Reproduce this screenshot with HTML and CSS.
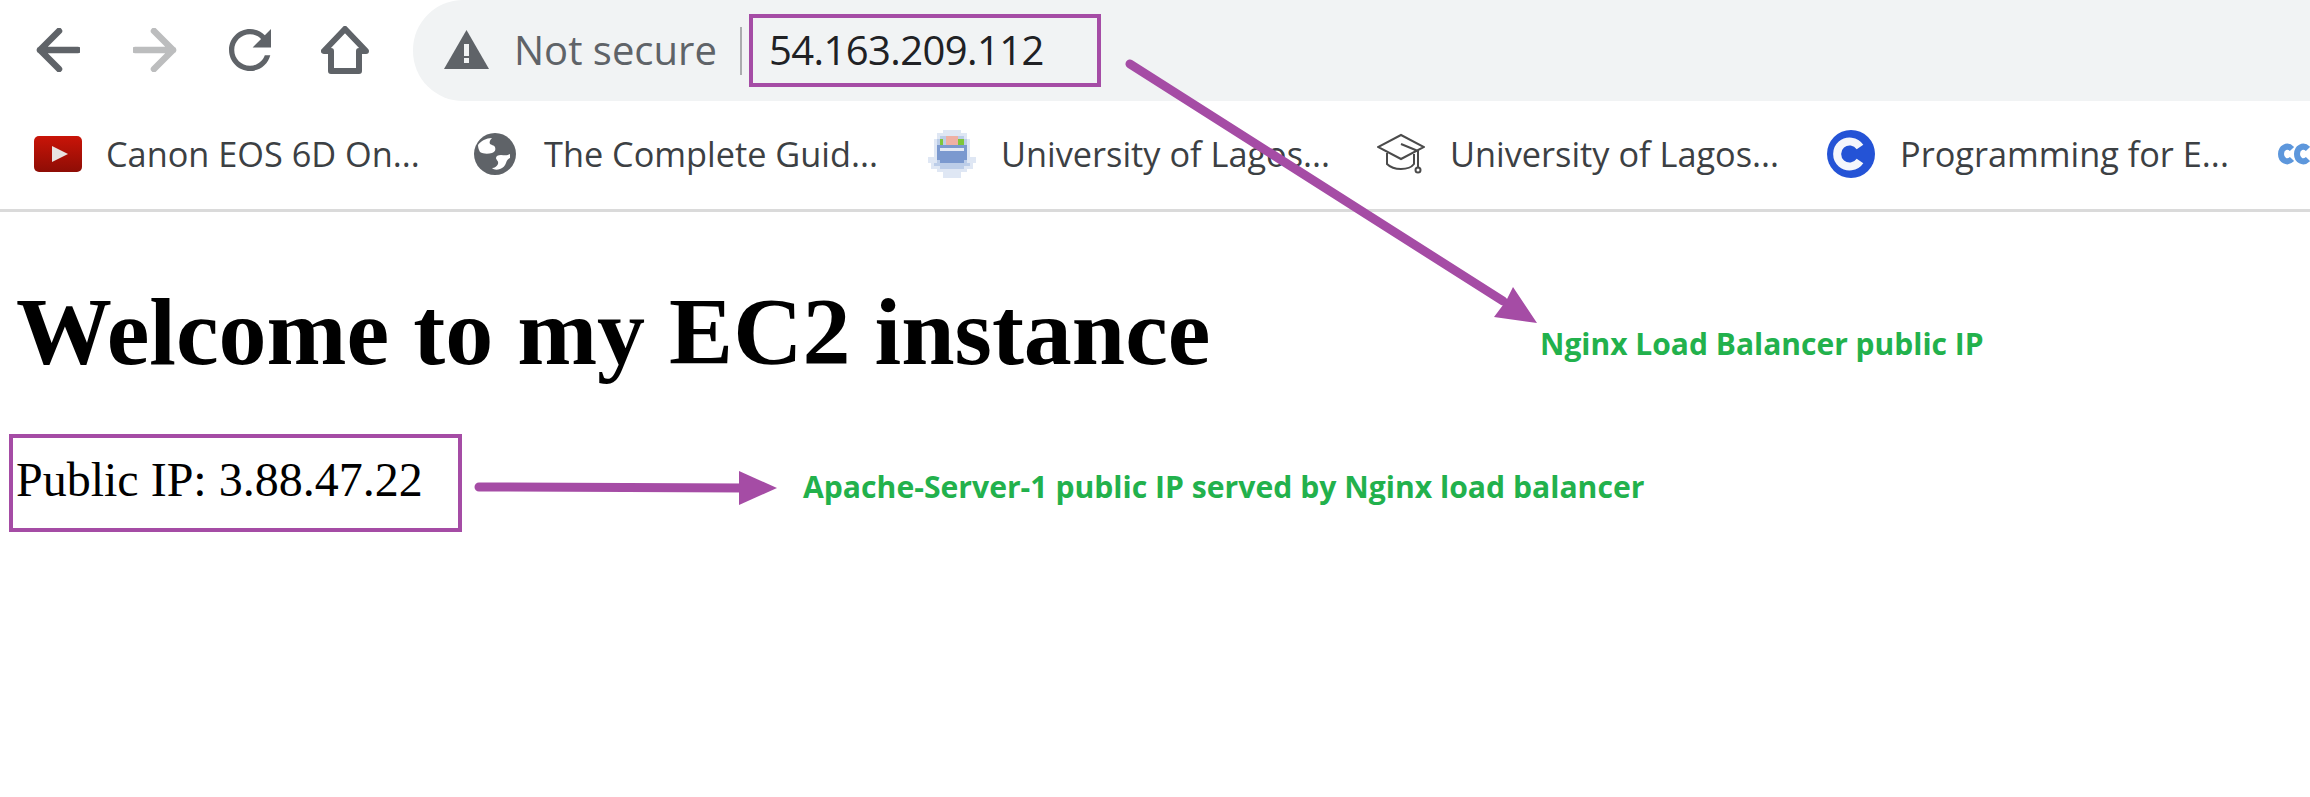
FILE: index.html
```html
<!DOCTYPE html>
<html lang="en">
<head>
<meta charset="utf-8">
<title>Welcome to my EC2 instance</title>
<link rel="stylesheet" href="styles.css">
</head>
<body>
<header class="toolbar">
  <nav class="nav-buttons">
    <svg class="icon-back" viewBox="0 0 44 44"><path d="M42 22H4M23 3 4 22l19 19"/></svg>
    <svg class="icon-forward" viewBox="0 0 44 44"><path d="M2 22H40M21 3l19 19-19 19"/></svg>
    <svg class="icon-reload" viewBox="4 4 16 16"><path d="M17.65 6.35C16.2 4.9 14.21 4 12 4c-4.42 0-7.99 3.58-7.99 8s3.57 8 7.99 8c3.73 0 6.84-2.55 7.73-6h-2.08c-.82 2.33-3.04 4-5.65 4-3.31 0-6-2.69-6-6s2.69-6 6-6c1.66 0 3.14.69 4.22 1.78L13 11h7V4l-2.35 2.35z"/></svg>
    <svg class="icon-home" viewBox="0 0 48 48"><path d="M24 3 3 25h7v20h28V25h7z"/></svg>
  </nav>
  <div class="omnibox">
    <svg class="icon-warning" viewBox="0 0 45 39"><path class="tri" d="M22.500 0 45 39H0z"/><path class="mark" d="M20 14h5v12h-5zM20 28h5v5h-5z"/></svg>
    <span class="not-secure">Not secure</span>
    <span class="divider"></span>
    <span class="address">54.163.209.112</span>
  </div>
</header>

<div class="bookmarks">
  <div class="bookmark bm-canon">
    <svg class="favicon fav-yt" viewBox="0 0 48 36"><defs><linearGradient id="yt" x1="0" y1="0" x2="0" y2="1"><stop offset="0" stop-color="#c91408"/><stop offset="1" stop-color="#8e0d05"/></linearGradient></defs><rect width="48" height="36" rx="5" fill="url(#yt)"/><path d="M18 10 34 18 18 26z" fill="#e8e4e2"/></svg>
    <span>Canon EOS 6D On...</span>
  </div>
  <div class="bookmark bm-guide">
    <svg class="favicon fav-globe" viewBox="0 0 42 42"><circle cx="21" cy="21" r="21" fill="#5f6368"/><path d="M4 12C7 8 12 5 18 5c-2 2-3 4-2 6 1 1 4 1 5 3 1 3 0 5-3 6-4 1-9 1-12-1-1-2-2-4-2-7z" fill="#fff"/><path d="M36 21c-3 2-6 1-9 1-3 0-5 1-5 3 0 2 3 3 2 6-1 2-3 4-6 4 2 2 5 2 8 1 3-1 5-3 6-6 1-3 2-4 4-5z" fill="#fff"/></svg>
    <span>The Complete Guid...</span>
  </div>
  <div class="bookmark bm-unilag">
    <svg class="favicon fav-uni" viewBox="0 0 16 16" shape-rendering="crispEdges">
      <path fill="#dfe7f4" d="M5 0h6v1h2v2h1v6h2v2h-1v2h-2v1h-2v2H5v-2H3v-1H1v-2H0V9h2V3h1V1h2z"/>
      <path fill="#bccde8" d="M4 2h8v1h1v8h1v1h-2v1H4v-1H2v-1h1V3h1z"/>
      <path fill="#7b99cf" d="M3 5h10v5h-1v1H4v-1H3z"/>
      <path fill="#e3e9f5" d="M4 6h8v1H4z"/>
      <path fill="#7ec63a" d="M4 3h1v2H4zM10 3h2v2h-2z"/>
      <path fill="#efb0a4" d="M6 2h4v3H6z"/>
    </svg>
    <span>University of Lagos...</span>
  </div>
  <div class="bookmark bm-unilag2">
    <svg class="favicon fav-cap" viewBox="0 0 48 42"><path d="M24 2 47 14 24 26 1 14z M10 20v11c4 4 8 5 14 5s10-1 13-5V21 M24 11l17 7v16"/><circle cx="41" cy="37" r="2.500"/></svg>
    <span>University of Lagos...</span>
  </div>
  <div class="bookmark bm-prog">
    <svg class="favicon fav-c" viewBox="0 0 48 48"><circle cx="24" cy="24" r="24" fill="#2453d6"/><path d="M33 17a12.500 12.500 0 1 0 0 14" fill="none" stroke="#f4f6fc" stroke-width="8"/></svg>
    <span>Programming for E...</span>
  </div>
  <svg class="favicon fav-inf" viewBox="0 0 32 24"><path d="M14 7C9 2 3 6 3 12s6 10 11 5M30 7c-5-5-11-1-11 5s6 10 11 5" fill="none" stroke="#5d97dc" stroke-width="6"/></svg>
</div>

<main class="page">
  <h1>Welcome to my EC2 instance</h1>
  <p class="ip">Public IP: 3.88.47.22</p>
</main>

<div class="annotations">
  <span class="frame frame-address"></span>
  <span class="frame frame-ip"></span>
  <svg class="arrows" viewBox="0 0 2310 797" width="2310" height="797">
    <path d="M1130 64 1503 301" class="shaft"/>
    <path d="M1537 323 1513 287 1506 301 1494 317z" class="head"/>
    <path d="M479 487 745 488" class="shaft"/>
    <path d="M777 488 739 471V505z" class="head"/>
  </svg>
  <span class="note note-nginx">Nginx Load Balancer public IP</span>
  <span class="note note-apache">Apache-Server-1 public IP served by Nginx load balancer</span>
</div>
</body>
</html>
```
FILE: styles.css
```css
* { box-sizing: border-box; }
html, body { margin: 0; padding: 0; background: #fff; }
body { width: 2310px; height: 797px; overflow: hidden; position: relative; }

.toolbar { display: flex; height: 101px; padding-left: 36px; }
.nav-buttons { display: flex; align-items: center; height: 100px; }
.nav-buttons svg { display: block; }
.nav-buttons path { fill: none; stroke-linecap: round; stroke-linejoin: round; }
.icon-back { width: 44px; height: 44px; margin-right: 53px; }
.icon-back path { stroke: #5f6368; stroke-width: 6.5; }
.icon-forward { width: 44px; height: 44px; margin-right: 52px; }
.icon-forward path { stroke: #bcbdbe; stroke-width: 6.5; }
.icon-reload { width: 42px; height: 42px; margin-right: 50px; }
.nav-buttons .icon-reload path { fill: #5f6368; }
.icon-home { width: 48px; height: 48px; margin-right: 44px; }
.icon-home path { stroke: #5f6368; stroke-width: 6; }

.omnibox {
  flex: 1;
  display: flex;
  align-items: center;
  height: 101px;
  padding-left: 31px;
  background: #f1f3f4;
  border-radius: 50px 0 0 50px;
  font-family: "Open Sans", sans-serif;
  font-size: 40px;
}
.icon-warning { width: 45px; height: 39px; margin-right: 25px; margin-top: -3px; }
.icon-warning .tri { fill: #5f6368; }
.icon-warning .mark { fill: #f1f3f4; }
.not-secure { color: #5f6368; width: 199px; white-space: nowrap; margin-top: -2px; }
.divider { width: 2px; height: 48px; margin: 0 27px 0 27px; background: #aaacae; }
.address { color: #202124; margin-top: -2px; white-space: nowrap; letter-spacing: -0.6px; }

.bookmarks {
  display: flex;
  align-items: center;
  height: 111px;
  padding-bottom: 3px;
  border-bottom: 3px solid #dadada;
  overflow: hidden;
  font-family: "Open Sans", sans-serif;
  font-size: 34.3px;
  color: #3c4043;
  white-space: nowrap;
}
.bookmark { display: flex; align-items: center; flex: none; }
.favicon { display: block; flex: none; }
.bm-canon { margin-left: 34px; width: 440px; }
.fav-yt { width: 48px; height: 36px; margin-right: 24px; }
.bm-guide { width: 454px; }
.fav-globe { width: 42px; height: 42px; margin-right: 28px; }
.bm-unilag { width: 449px; }
.fav-uni { width: 48px; height: 48px; margin-right: 25px; }
.bm-unilag2 { width: 450px; }
.fav-cap { width: 48px; height: 42px; margin-right: 25px; fill: none; stroke: #4b4b4b; stroke-width: 2; }
.bm-prog { width: 450px; }
.fav-c { width: 48px; height: 48px; margin-right: 25px; }
.fav-inf { width: 34px; height: 24px; }

.page { padding: 0 16px; }
h1 {
  margin: 65px 0 0;
  font: bold 96px/110px "Liberation Serif", serif;
  color: #000;
  white-space: nowrap;
}
.ip {
  margin: 65px 0 0;
  font: 48px/55px "Liberation Serif", serif;
  color: #000;
  white-space: nowrap;
}

.annotations { position: absolute; inset: 0; pointer-events: none; }
.frame { position: absolute; border: 4px solid #a54ca5; }
.frame-address { left: 749px; top: 14px; width: 352px; height: 73px; }
.frame-ip { left: 9px; top: 434px; width: 453px; height: 98px; }
.arrows { position: absolute; left: 0; top: 0; display: block; }
.shaft { fill: none; stroke: #a54ca5; stroke-width: 9; stroke-linecap: round; }
.head { fill: #a54ca5; }
.note {
  position: absolute;
  font-family: "Open Sans", sans-serif;
  font-weight: 700;
  color: #22b14c;
  white-space: nowrap;
  line-height: 40px;
}
.note-nginx { left: 1540px; top: 324px; font-size: 30px; }
.note-apache { left: 803px; top: 467px; font-size: 30.15px; }
```
